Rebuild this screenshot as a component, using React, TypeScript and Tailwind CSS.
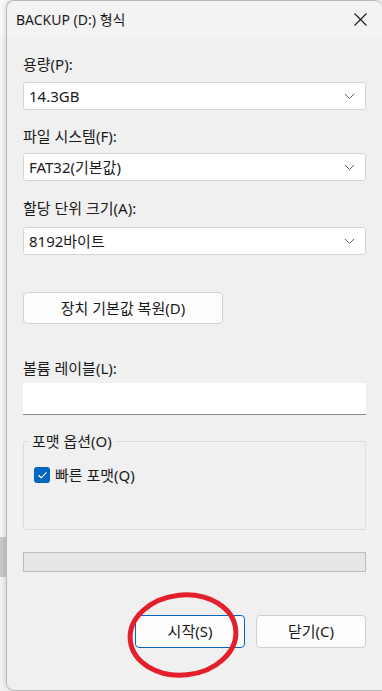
import { Check } from 'lucide-react';

const font = { fontFamily: '"Segoe UI", "Noto Sans", "Noto Sans CJK KR", sans-serif' };

function Chevron() {
  return (
    <svg width="11" height="7" viewBox="0 0 11 7" className="text-[#5f5f5f]">
      <path d="M1 1l4.5 4.5L10 1" fill="none" stroke="currentColor" strokeWidth="1" />
    </svg>
  );
}

function Select({ value, className = '' }: { value: string; className?: string }) {
  return (
    <div
      className={`flex h-[28px] items-center justify-between rounded-[3px] border border-[#d5d5d5] bg-white pl-[5px] pr-[10px] text-[15px] text-[#1a1a1a] ${className}`}
    >
      <span>{value}</span>
      <Chevron />
    </div>
  );
}

function Label({ text, className = '' }: { text: string; className?: string }) {
  return <div className={`h-[20px] text-[15px] leading-[20px] text-[#1a1a1a] ${className}`}>{text}</div>;
}

export default function App() {
  return (
    <div className="relative flex h-[691px] w-[382px] overflow-hidden bg-[#f7f7f7]" style={font}>
      {/* desktop strip behind the dialog */}
      <div className="flex w-[6px] flex-col">
        <div className="h-[36px] bg-[#fafafa]" />
        <div className="h-[501px] bg-[#f4f4f4]" />
        <div className="h-[40px] bg-[#c9c9c9]" />
        <div className="flex-1 bg-[#f2f2f2]" />
      </div>

      {/* dialog */}
      <div className="flex flex-1 flex-col rounded-t-[8px] rounded-bl-[8px] border-l border-t border-b border-[#b9b9b9] bg-[#f0f0f0] shadow-[0_0_6px_rgba(0,0,0,0.18)]">
        {/* title bar */}
        <div className="flex h-[36px] shrink-0 items-center justify-between rounded-t-[8px] bg-[#f3f3f3] pl-[9px] pr-[15px]">
          <span className="text-[14px] text-[#1a1a1a]">BACKUP (D:) 형식</span>
          <svg width="13" height="13" viewBox="0 0 13 13">
            <path d="M0.5 0.5l12 12M12.5 0.5l-12 12" stroke="#1a1a1a" strokeWidth="1.1" fill="none" />
          </svg>
        </div>

        {/* body */}
        <div className="flex flex-col pl-[16px] pr-[16px] pt-[17px]">
          <Label text="용량(P):" />
          <Select value="14.3GB" className="mt-[8px]" />

          <Label text="파일 시스템(F):" className="mt-[16px]" />
          <Select value="FAT32(기본값)" className="mt-[7px]" />

          <Label text="할당 단위 크기(A):" className="mt-[17px]" />
          <Select value="8192바이트" className="mt-[9px]" />

          <button className="mt-[37px] flex h-[32px] w-[200px] items-center justify-center rounded-[4px] border border-[#d0d0d0] bg-[#fdfdfd] text-[15px] text-[#1a1a1a]">
            장치 기본값 복원(D)
          </button>

          <Label text="볼륨 레이블(L):" className="mt-[34px]" />
          <div className="mt-[5px] h-[32px] border-b border-[#8a8a8a] bg-white" />

          <fieldset className="mt-[16px] h-[99px] rounded-[2px] border border-[#dcdcdc]">
            <legend className="ml-[4px] px-[4px] text-[15px] leading-[20px] text-[#1a1a1a]">포맷 옵션(O)</legend>
            <div className="ml-[10px] mt-[14px] flex h-[20px] items-center gap-[5px]">
              <span className="flex h-[16px] w-[16px] items-center justify-center rounded-[3px] bg-[#0067c0]">
                <Check className="h-[11px] w-[11px] text-white" strokeWidth={2.5} />
              </span>
              <span className="text-[15px] text-[#1a1a1a]">빠른 포맷(Q)</span>
            </div>
          </fieldset>

          <div className="mt-[22px] h-[20px] border border-[#bcbcbc] bg-[#e6e6e6]" />

          <div className="mt-[43px] flex justify-end gap-[11px]">
            <button className="flex h-[33px] w-[110px] items-center justify-center rounded-[4px] border border-[#0067c0] bg-[#fdfdfd] text-[15px] text-[#1a1a1a]">
              시작(S)
            </button>
            <button className="flex h-[33px] w-[110px] items-center justify-center rounded-[4px] border border-[#d0d0d0] bg-[#fdfdfd] text-[15px] text-[#1a1a1a]">
              닫기(C)
            </button>
          </div>
        </div>
      </div>

      {/* red annotation circle */}
      <svg className="absolute left-[124px] top-[590px]" width="118" height="90" viewBox="0 0 118 90">
        <ellipse cx="59" cy="45" rx="53" ry="40" fill="none" stroke="#e41e2a" strokeWidth="5" transform="rotate(-6 59 45)" />
      </svg>
    </div>
  );
}
